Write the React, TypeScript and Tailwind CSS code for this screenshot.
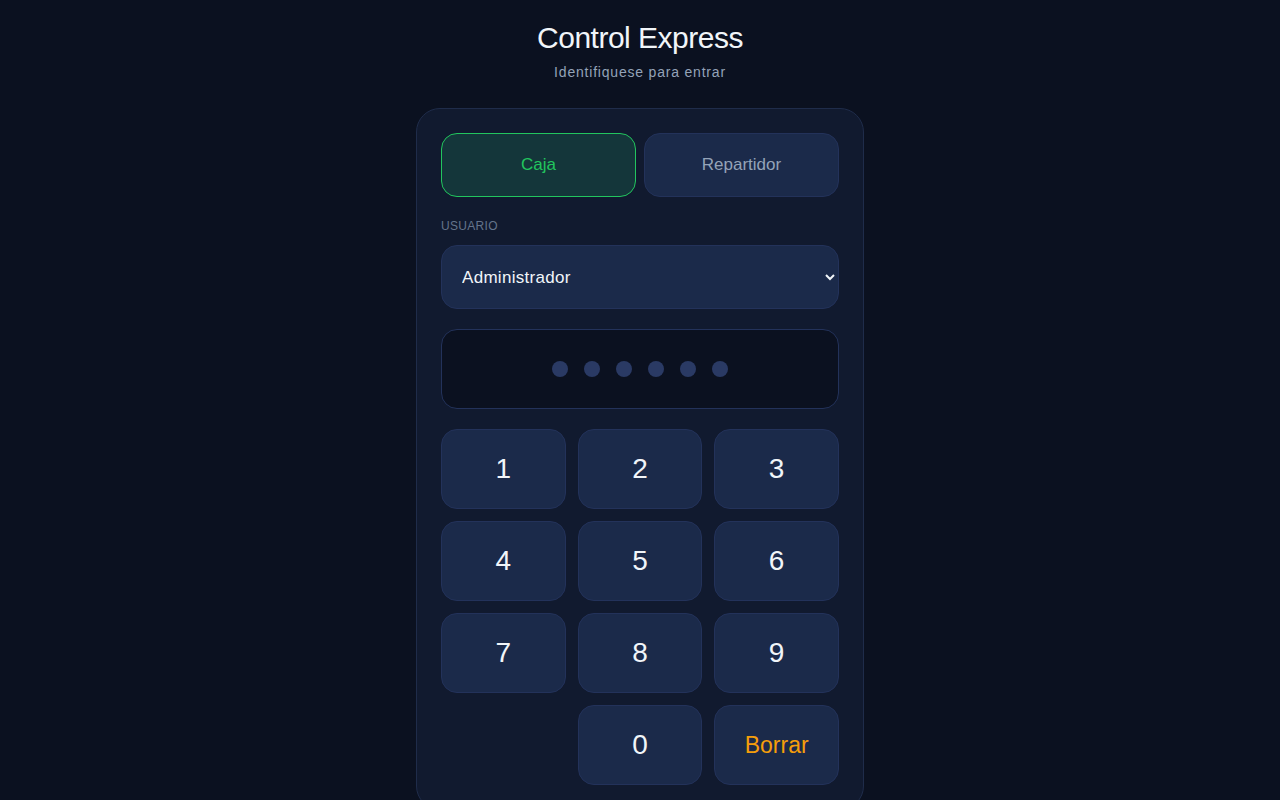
import { useState } from 'react';

const KEYS = ['1', '2', '3', '4', '5', '6', '7', '8', '9', '', '0', 'Borrar'];

export default function App() {
  const [mode, setMode] = useState<'caja' | 'repartidor'>('caja');
  const [user, setUser] = useState('Administrador');
  const [pin, setPin] = useState('');

  const press = (k: string) => {
    if (k === 'Borrar') {
      setPin((p) => p.slice(0, -1));
      return;
    }
    if (pin.length < 6) setPin(pin + k);
  };

  return (
    <div
      className="min-h-screen bg-[#0b1120] text-white flex flex-col items-center pt-5"
      style={{ fontFamily: '"Liberation Sans", Arial, sans-serif' }}
    >
      {/* Header */}
      <h1 className="text-[30px] leading-9 font-normal tracking-[-0.5px] text-[#f1f5f9]">Control Express</h1>
      <p className="mt-1.5 text-sm tracking-[0.8px] text-[#94a3b8]">Identifiquese para entrar</p>

      {/* Card */}
      <div className="mt-[26px] w-[448px] rounded-3xl border border-[#1f2c4a] bg-[#111a2f] p-6">
        <div className="grid grid-cols-2 gap-2">
          <button
            onClick={() => setMode('caja')}
            className={
              mode === 'caja'
                ? 'h-16 rounded-2xl border border-[#22c55e] bg-[#14363a] text-[#22c55e] text-[17px]'
                : 'h-16 rounded-2xl border border-[#23325a] bg-[#1b2a4a] text-[#94a3b8] text-[17px]'
            }
          >
            Caja
          </button>
          <button
            onClick={() => setMode('repartidor')}
            className={
              mode === 'repartidor'
                ? 'h-16 rounded-2xl border border-[#22c55e] bg-[#14363a] text-[#22c55e] text-[17px]'
                : 'h-16 rounded-2xl border border-[#23325a] bg-[#1b2a4a] text-[#94a3b8] text-[17px]'
            }
          >
            Repartidor
          </button>
        </div>

        <label className="mt-[21px] block text-xs tracking-wide text-[#64748b]">USUARIO</label>
        <select
          value={user}
          onChange={(e) => setUser(e.target.value)}
          className="mt-[11px] h-16 w-full rounded-2xl border border-[#23325a] bg-[#1b2a4a] pl-4 pr-2 text-[17px] tracking-[0.3px] text-[#f1f5f9] outline-none"
        >
          <option>Administrador</option>
          <option>Cajero</option>
        </select>

        {/* PIN display */}
        <div className="mt-5 h-20 rounded-2xl border border-[#23325a] bg-[#0b1120] flex items-center justify-center gap-4">
          {[0, 1, 2, 3, 4, 5].map((i) => (
            <span
              key={i}
              className={i < pin.length ? 'h-4 w-4 rounded-full bg-[#22c55e]' : 'h-4 w-4 rounded-full bg-[#2a3a64]'}
            />
          ))}
        </div>

        {/* Keypad */}
        <div className="mt-5 grid grid-cols-3 gap-3">
          {KEYS.map((k, i) =>
            k === '' ? (
              <div key={i} />
            ) : (
              <button
                key={i}
                onClick={() => press(k)}
                className={
                  k === 'Borrar'
                    ? 'h-20 rounded-2xl border border-[#23325a] bg-[#1b2a4a] text-[23px] text-[#f59e0b]'
                    : 'h-20 rounded-2xl border border-[#23325a] bg-[#1b2a4a] text-[28px] text-[#f1f5f9]'
                }
              >
                {k}
              </button>
            )
          )}
        </div>
      </div>
    </div>
  );
}
